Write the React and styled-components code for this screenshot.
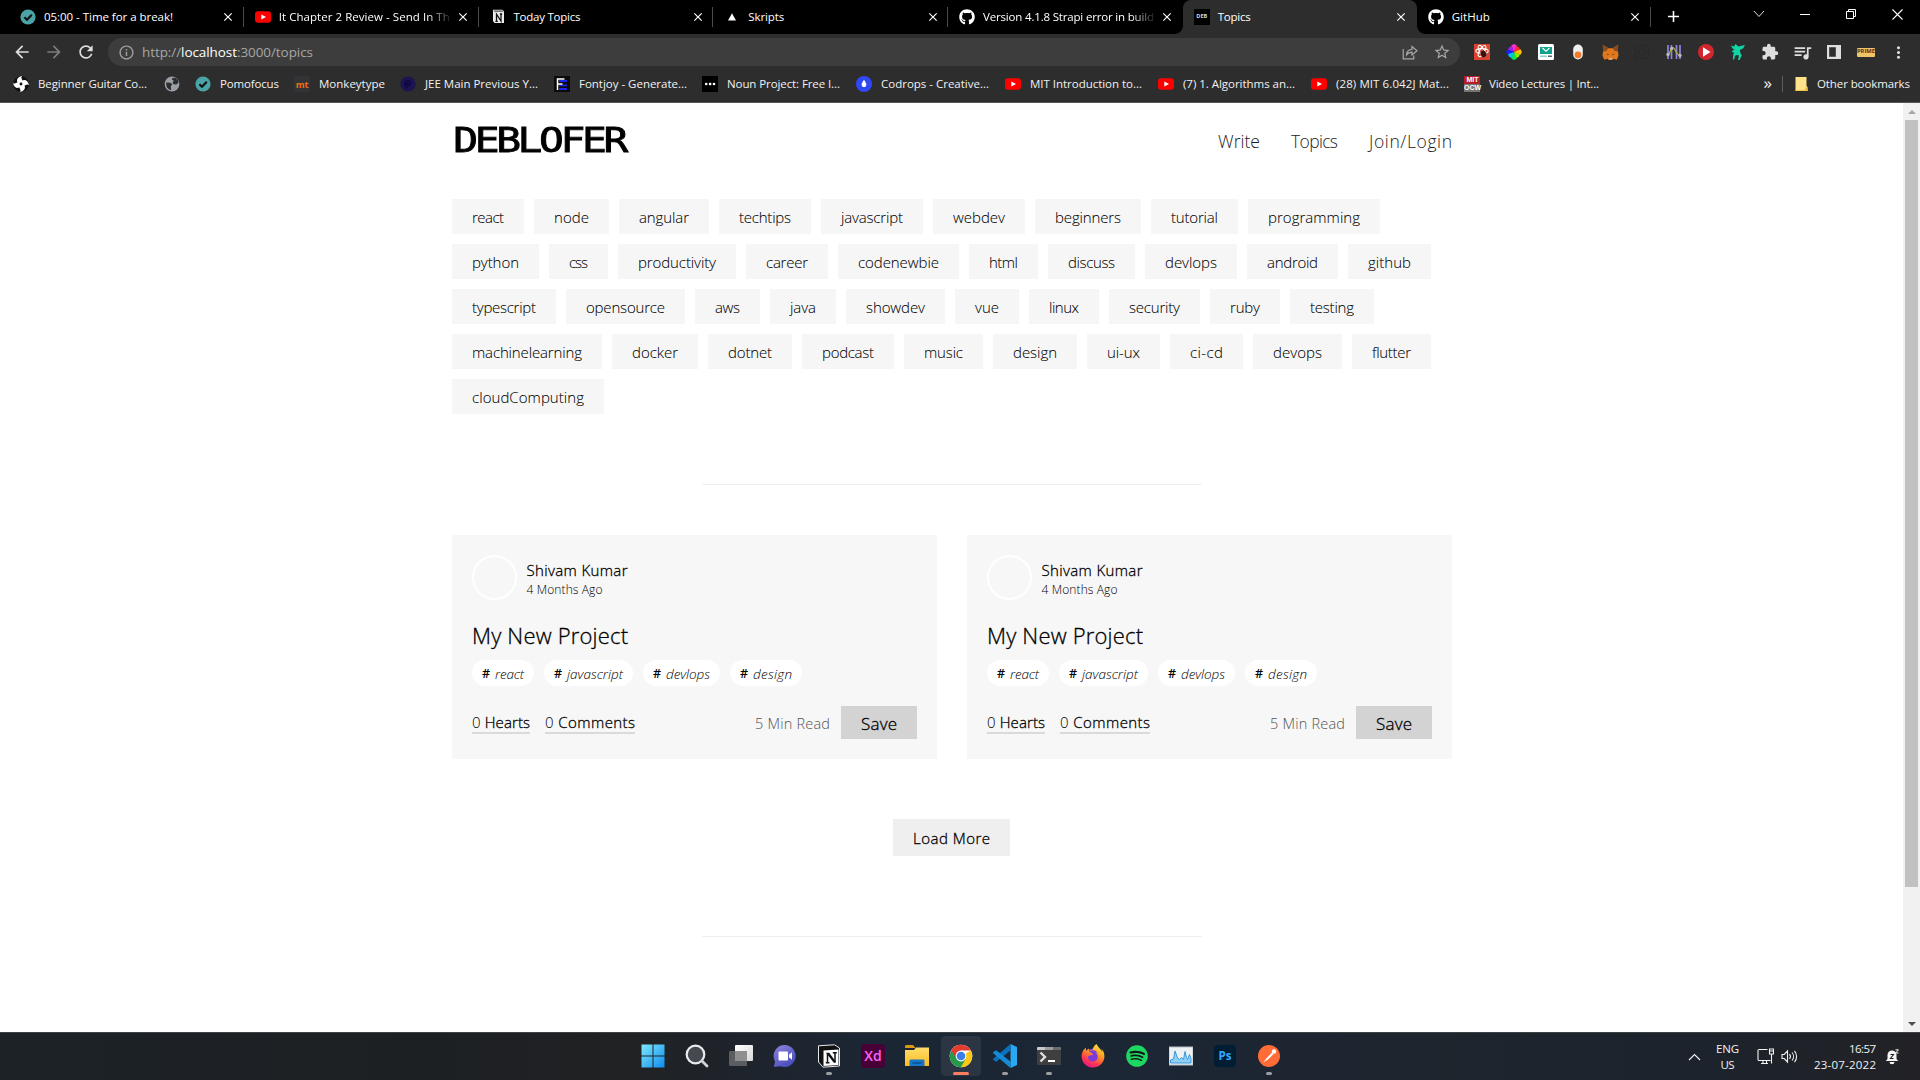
import React, { useLayoutEffect, useRef, useState } from "react";
import styled, { createGlobalStyle, css } from "styled-components";
import {
  MdArrowBack, MdArrowForward, MdRefresh, MdStarBorder, MdExtension, MdQueueMusic,
  MdMoreVert, MdInfoOutline, MdClose, MdAdd,
} from "react-icons/md";
import { FaGithub, FaFirefoxBrowser, FaSpotify } from "react-icons/fa";

const Global = createGlobalStyle`
  * { box-sizing: border-box; }
  body { margin: 0; overflow: hidden; background: #fff; font-family: "Open Sans", "Noto Sans", sans-serif; }
  svg { display: block; flex: none; }
`;

/* A weight between light and regular. */
const semilight = css`
  font-weight: 300;
  -webkit-text-stroke: 0.3px currentColor;
`;

/* Text that is tracked in or out so that it fills a given measure. */
const FitBox = styled.span`
  display: inline-block;
  flex: none;
  white-space: pre;
`;

function Fit({ w, children }) {
  const ref = useRef(null);
  const [spacing, setSpacing] = useState(0);
  useLayoutEffect(() => {
    const el = ref.current;
    const range = document.createRange();
    range.selectNodeContents(el);
    const scale = el.getBoundingClientRect().width / w;
    const natural = range.getBoundingClientRect().width / scale;
    setSpacing((w - natural) / Math.max(1, el.textContent.length - 1));
  }, [w]);
  return (
    <FitBox ref={ref} style={{ width: w, letterSpacing: `${spacing}px` }}>
      {children}
    </FitBox>
  );
}

/* ---------- window ---------- */

const Screen = styled.div`
  width: 1920px;
  height: 1080px;
  display: flex;
  flex-direction: column;
  overflow: hidden;
`;

const TabStrip = styled.div`
  height: 34px;
  flex: none;
  display: flex;
  background: #000;
  padding-left: 9px;
`;

const TabItem = styled.div`
  position: relative;
  flex: none;
  width: ${(p) => p.$w}px;
  height: 34px;
  display: flex;
  align-items: center;
  padding: 0 8.5px 0 11px;
  color: #fff;
  border-radius: 8px 8px 0 0;
  background: ${(p) => (p.$active ? "#2d2d2d" : "transparent")};
  ${(p) =>
    p.$active
      ? css`
          &::before, &::after {
            content: "";
            position: absolute;
            bottom: 0;
            width: 8px;
            height: 8px;
          }
          &::before { left: -8px; background: radial-gradient(circle at 0 0, #000 7.5px, #2d2d2d 8px); }
          &::after { right: -8px; background: radial-gradient(circle at 100% 0, #000 7.5px, #2d2d2d 8px); }
        `
      : ""}
`;

const TabTitle = styled.div`
  flex: 1;
  margin-left: 8px;
  font-size: 11.5px;
  line-height: 18px;
  white-space: nowrap;
  ${(p) => p.$fade && "mask-image: linear-gradient(to right, #000 calc(100% - 26px), transparent 100%);"}
`;

const TabClose = styled(MdClose)`
  width: 14px;
  height: 14px;
  margin-left: 3px;
  color: #fff;
  stroke: #fff;
`;

const TabRule = styled.div`
  width: 1px;
  height: 20px;
  margin: 7px 0 0 -1px;
  background: ${(p) => (p.$hidden ? "transparent" : "#4c4c4c")};
  flex: none;
  z-index: 1;
`;

const NewTab = styled(MdAdd)`
  width: 19px;
  height: 19px;
  margin: 7px 0 0 13px;
  color: #fff;
`;

const WindowControls = styled.div`
  margin-left: auto;
  display: flex;
  height: 28px;
`;

const WindowButton = styled.div`
  width: 46px;
  height: 28px;
  display: flex;
  align-items: center;
  justify-content: center;
`;

const Toolbar = styled.div`
  height: 36px;
  flex: none;
  display: flex;
  align-items: center;
  background: #2d2d2d;
  padding-left: 6px;
`;

const ToolCell = styled.div`
  width: 32px;
  height: 28px;
  flex: none;
  display: flex;
  align-items: center;
  justify-content: center;
  color: ${(p) => p.$color || "#dedede"};
`;

const Omnibox = styled.div`
  width: 1352px;
  height: 28px;
  margin: 0 6px;
  flex: none;
  display: flex;
  align-items: center;
  padding: 0 2px;
  border-radius: 14px;
  background: #3d3d3d;
`;

const Url = styled.div`
  flex: 1;
  font-size: 13.5px;
  line-height: 20px;
  color: #a6a6a6;
  b { font-weight: 400; color: #fff; }
`;

const BookmarkBar = styled.div`
  height: 33px;
  flex: none;
  display: flex;
  align-items: center;
  background: #2d2d2d;
  border-bottom: 1px solid #565656;
  padding: 0 10px 4px 13px;
  color: #f1f1f1;
  font-size: 11.5px;
  line-height: 18px;
`;

const Bookmark = styled.div`
  display: flex;
  align-items: center;
  gap: 9px;
  flex: none;
  margin-right: ${(p) => p.$after ?? 16}px;
`;

const BarRule = styled.div`
  width: 1px;
  height: 16px;
  margin: 0 12px 0 9px;
  background: #5c5c5c;
`;

const Overflow = styled.div`
  margin-left: auto;
  font-size: 17px;
  line-height: 14px;
  padding: 0 1px 3px 0;
`;

/* ---------- small icon tiles ---------- */

const MitTile = styled.div`
  width: 16px;
  height: 16px;
  flex: none;
  display: grid;
  grid-template-rows: 8px 8px;
  background: linear-gradient(#b31f27 50%, #77746f 50%);
  color: #fff;
  font: 700 7px/8px "Liberation Sans", sans-serif;
  text-align: center;
`;

const LetterTile = styled.div`
  width: ${(p) => p.$w || 16}px;
  height: ${(p) => p.$h || 16}px;
  flex: none;
  display: flex;
  align-items: center;
  justify-content: center;
  background: ${(p) => p.$bg};
  color: ${(p) => p.$color};
  border-radius: ${(p) => p.$r || 0}px;
  font: ${(p) => p.$weight || 700} ${(p) => p.$size}px/1 "Open Sans", sans-serif;
`;

const Check = () => (
  <svg width="16" height="16" viewBox="0 0 16 16">
    <circle cx="8" cy="8" r="7.6" fill="#4ba3a8" />
    <path d="M4.4 8.2l2.6 2.6 4.8-5" fill="none" stroke="#111" strokeWidth="2.2" />
  </svg>
);
const YouTube = () => (
  <svg width="16" height="16" viewBox="0 0 16 16">
    <rect x="0" y="2.2" width="16" height="11.6" rx="3" fill="#f00" />
    <path d="M6.3 5.4v5.2L11 8z" fill="#fff" />
  </svg>
);
const Triangle = () => (
  <svg width="16" height="16" viewBox="0 0 16 16"><path d="M8 4.2l4 7.4H4z" fill="#fff" /></svg>
);
const NotionTab = () => (
  <svg width="16" height="16" viewBox="0 0 16 16">
    <path d="M3 1.2h9.5l1.5 2V14H4.5L3 12z" fill="#ededed" />
    <path d="M3 1.2h9.5l1.3 1.7H4.5z" fill="#111" stroke="#ededed" strokeWidth=".8" />
    <path d="M6.5 12.2V5.2l4.5 6.8V5M5.4 12.3h2.4M9.8 5h2.4" fill="none" stroke="#111" strokeWidth="1.3" />
  </svg>
);
const Pinwheel = () => (
  <svg width="16" height="16" viewBox="0 0 16 16">
    <circle cx="8" cy="8" r="7.8" fill="#111" />
    <g fill="#fff">
      {[0, 90, 180, 270].map((a) => (
        <path key={a} transform={`rotate(${a} 8 8)`} d="M5.4 7.6C2.8 5 3.8 1.2 9 0 7.2 2.6 10.4 3.6 9.8 6.6z" />
      ))}
    </g>
    <circle cx="8" cy="8" r="1.4" fill="#111" />
  </svg>
);
const Swirl = () => (
  <svg width="16" height="16" viewBox="0 0 16 16">
    <circle cx="8" cy="8" r="7.6" fill="#1c1450" />
    <path d="M8.3 8a1 1 0 1 0-1 1.2c2 .6 3.5-1 3.2-2.6C10 4.3 6.5 4 5.2 6.2 4 8.6 5.2 11.6 8.2 11.8" fill="none" stroke="#0c0540" strokeWidth="1.3" />
  </svg>
);
const FTile = () => (
  <svg width="16" height="16" viewBox="0 0 16 16">
    <rect width="16" height="16" fill="#0b0b0f" />
    <path d="M5 5h8M5 9.3h8M5 13h8" stroke="#1a26e8" strokeWidth="1.8" />
    <path d="M3.5 14V3h7M3.5 8h5" fill="none" stroke="#fff" strokeWidth="1.5" />
  </svg>
);
const Dots = () => (
  <svg width="16" height="16" viewBox="0 0 16 16">
    <rect width="16" height="16" fill="#000" />
    <circle cx="4.2" cy="8" r="1.3" fill="#fff" /><rect x="6.9" y="6.8" width="2.4" height="2.4" fill="#fff" /><circle cx="12" cy="8" r="1.3" fill="#fff" />
  </svg>
);
const Drop = () => (
  <svg width="16" height="16" viewBox="0 0 16 16">
    <circle cx="8" cy="8" r="8" fill="#2f48f5" />
    <path d="M8 3.8c1.5 2.4 2.4 3.6 2.4 5a2.4 2.4 0 0 1-4.8 0c0-1.4.9-2.6 2.4-5z" fill="#fff" />
  </svg>
);
const Globe = () => (
  <svg width="16" height="16" viewBox="0 0 16 16">
    <circle cx="8" cy="8" r="7.4" fill="#9aa0a6" />
    <path d="M2.3 6.5l4 .3 2 1.5-1.5 2 .4 3.6C4 13.5 1.8 11 2.3 6.5zM8.5 2l2.5-.3c2 .9 3.3 2.5 3.6 4.8l-2.1 2-3-.3-1-2 1.5-1.4-2-1z" fill="#2d2d2d" />
  </svg>
);
const Folder = () => (
  <svg width="13" height="16" viewBox="0 0 13 16">
    <path d="M.5 1h11v9l1 1v4H.5z" fill="#ffe28a" /><path d="M10 15v-3.6h2.4V15z" fill="#f3c43c" />
    <path d="M.5 14.5h12" stroke="#f3c43c" />
  </svg>
);

const TABS = [
  { title: "05:00 - Time for a break!", w: 129, icon: <Check /> },
  { title: "It Chapter 2 Review - Send In Th", w: 171, icon: <YouTube />, fade: true },
  { title: "Today Topics", w: 67, icon: <NotionTab /> },
  { title: "Skripts", w: 36, icon: <Triangle /> },
  { title: "Version 4.1.8 Strapi error in build", w: 171, icon: <FaGithub size={16} color="#fff" />, fade: true },
  { title: "Topics", w: 33, icon: <LetterTile $bg="#000" $color="#d8d8d8" $size={5.5}>DEB</LetterTile>, active: true },
  { title: "GitHub", w: 38, icon: <FaGithub size={16} color="#fff" /> },
];

const BOOKMARKS = [
  { title: "Beginner Guitar Co...", w: 109, icon: <Pinwheel />, after: 17 },
  { icon: <Globe />, after: 15 },
  { title: "Pomofocus", w: 59, icon: <Check />, after: 15 },
  { title: "Monkeytype", w: 66, icon: <LetterTile $bg="#323437" $color="#f66e0d" $size={9} $r={3}>mt</LetterTile>, after: 15 },
  { title: "JEE Main Previous Y...", w: 113, icon: <Swirl /> },
  { title: "Fontjoy - Generate...", w: 108, icon: <FTile />, after: 15 },
  { title: "Noun Project: Free I...", w: 113, icon: <Dots /> },
  { title: "Codrops - Creative...", w: 108, icon: <Drop /> },
  { title: "MIT Introduction to...", w: 112, icon: <YouTube /> },
  { title: "(7) 1. Algorithms an...", w: 112, icon: <YouTube /> },
  { title: "(28) MIT 6.042J Mat...", w: 113, icon: <YouTube />, after: 15 },
  { title: "Video Lectures | Int...", w: 110, icon: <MitTile><span>MIT</span><span>OCW</span></MitTile> },
];

const EXTENSIONS = [
  <svg width="16" height="16" viewBox="0 0 16 16">
    <rect width="16" height="16" fill="#d9432f" />
    <g fill="none" stroke="#fff" strokeWidth="1.1"><ellipse cx="8" cy="7" rx="6.2" ry="2.4" /><ellipse cx="8" cy="7" rx="6.2" ry="2.4" transform="rotate(60 8 7)" /><ellipse cx="8" cy="7" rx="6.2" ry="2.4" transform="rotate(120 8 7)" /></g>
    <ellipse cx="9.5" cy="10" rx="2.8" ry="3.4" fill="#35120e" transform="rotate(-30 9.5 10)" />
  </svg>,
  <svg width="16" height="16" viewBox="-8 -8 16 16">
    {["#ff2a2a", "#ff2ad0", "#a020f0", "#2020ff", "#00c8ff", "#00e860", "#8cf000", "#ffc000"].map((c, i) => (
      <path key={c} d="M0 0L-2.7 -6.4L0 -7.6L2.7 -6.4z" fill={c} transform={`rotate(${i * -45 + 45}) scale(1 ${i % 2 ? 1.04 : 0.9})`} />
    ))}
  </svg>,
  <svg width="16" height="16" viewBox="0 0 16 16">
    <rect width="16" height="16" rx="1.5" fill="#fff" /><rect x="2" y="3" width="12" height="7" fill="#12a18c" />
    <path d="M4.5 4l3.5 3.2L11.5 4" fill="none" stroke="#fff" strokeWidth="1.2" /><path d="M2 11.5h7v1.5H2z" fill="#8fd3c8" /><path d="M10 11.5h4v1.5h-4z" fill="#5a6670" />
  </svg>,
  <svg width="16" height="16" viewBox="0 0 16 16">
    <rect x="3.2" y=".5" width="9.6" height="15" rx="4.8" fill="#eee" /><circle cx="8" cy="10.8" r="3.4" fill="#f47b25" />
  </svg>,
  <svg width="17" height="17" viewBox="0 0 16 16">
    <path d="M.8.8L6 4h4L15.2.8 15 7l.6 3.5-1.6 4.3-3-1L9.5 15h-3L5 13.8l-3 1L.4 10.5 1 7z" fill="#e2761b" />
    <path d="M.8.8L6 4 4 6.5 1 7zM15.2.8L10 4l2 2.5 3 .5z" fill="#8a4a1c" />
    <path d="M4.5 9l2 1-1 .6zM11.5 9l-2 1 1 .6z" fill="#233447" /><path d="M6.3 13h3.4v1.5H6.3z" fill="#c0ad9e" />
  </svg>,
  <svg width="16" height="16" viewBox="0 0 16 16" fill="none" stroke="#292929" strokeWidth="1.2"><rect x="1.5" y="1.5" width="13" height="13" rx="2" /><circle cx="8" cy="8" r="3" /></svg>,
  <svg width="16" height="16" viewBox="0 0 16 16" fill="none">
    <path d="M2 1v14M5.5 1v14M10.5 1v14M14 1v14" stroke="#8e86e0" strokeWidth="1.7" />
    <path d="M1.5 11C4 11 4.5 3 7 3.5S10 11.5 14 11" stroke="#b6b62c" strokeWidth="1.2" />
    <circle cx="2" cy="10.5" r="1.7" fill="#b9b9b9" /><circle cx="5.7" cy="4.5" r="1.7" fill="#b9b9b9" /><circle cx="14" cy="11.5" r="1.7" fill="#b9b9b9" />
  </svg>,
  <svg width="16" height="16" viewBox="0 0 16 16"><circle cx="8" cy="8" r="8" fill="#d2262f" /><path d="M5 3.2v9.6L12.5 8z" fill="#fff" /></svg>,
  <svg width="16" height="16" viewBox="0 0 16 16" fill="#0fd6a4">
    <path d="M1 1.5l3 1L5.5 0l3 2.5 6.5-1.5-2 3.5L9.8 6l.8 3.5 1.2 1.8L9.6 16H8l1-4.5-2.5-.5L5 12l-.8 3.5H2.8l.5-4.5L4 8l-1.5.5L2 7l2.5-1.5L2.5 4.5z" />
  </svg>,
  <MdExtension size={18} />,
  <MdQueueMusic size={21} />,
  <svg width="14" height="14" viewBox="0 0 14 14"><path fillRule="evenodd" d="M0 0h14v14H0zM2.2 2.2v9.6h6.6V2.2z" fill="#dedede" /></svg>,
  <LetterTile $bg="#f0c568" $color="#5e2a1a" $size={5.8} $w={18} $h={9} $r={1}>PRIME</LetterTile>,
  <MdMoreVert size={19} />,
];

function Browser() {
  return (
    <>
      <TabStrip>
        {TABS.map((t, i) => (
          <React.Fragment key={t.title}>
            <TabItem $active={t.active} $w={i < 5 ? 234.75 : 234}>
              {t.icon}
              <TabTitle $fade={t.fade}><Fit w={t.w}>{t.title}</Fit></TabTitle>
              <TabClose />
            </TabItem>
            <TabRule $hidden={i === 4 || i === 5} />
          </React.Fragment>
        ))}
        <NewTab />
        <WindowControls>
          <WindowButton><svg width="12" height="8" viewBox="0 0 12 8" fill="none" stroke="#ddd"><path d="M1 1l5 5.5L11 1" /></svg></WindowButton>
          <WindowButton><svg width="10" height="10" viewBox="0 0 10 10"><path d="M0 5.5h10" stroke="#fff" /></svg></WindowButton>
          <WindowButton><svg width="10" height="10" viewBox="0 0 10 10" fill="none" stroke="#fff"><path d="M.5 2.5h7v7h-7zM2.5 2.5v-2h7v7h-2" /></svg></WindowButton>
          <WindowButton><svg width="11" height="11" viewBox="0 0 11 11" fill="none" stroke="#fff" strokeWidth="1.1"><path d="M.5.5l10 10M10.5.5l-10 10" /></svg></WindowButton>
        </WindowControls>
      </TabStrip>
      <Toolbar>
        <ToolCell><MdArrowBack size={20} /></ToolCell>
        <ToolCell $color="#7c7c7c"><MdArrowForward size={20} /></ToolCell>
        <ToolCell><MdRefresh size={20} /></ToolCell>
        <Omnibox>
          <ToolCell $color="#a0a0a0"><MdInfoOutline size={17} /></ToolCell>
          <Url><Fit w={171}>http://<b>localhost</b>:3000/topics</Fit></Url>
          <ToolCell $color="#a8a8a8">
            <svg width="16" height="16" viewBox="0 0 16 16" fill="none" stroke="#a8a8a8" strokeWidth="1.2">
              <path d="M1.2 5v9.8h10.6V11.5M4.5 11c.3-4 2.5-5.5 5.5-5.6V2.6L15 6.8 10 11V8.2C7.5 8.2 6 9 4.5 11z" />
            </svg>
          </ToolCell>
          <ToolCell $color="#a8a8a8"><MdStarBorder size={18} /></ToolCell>
        </Omnibox>
        {EXTENSIONS.map((e, i) => <ToolCell key={i}>{e}</ToolCell>)}
      </Toolbar>
      <BookmarkBar>
        {BOOKMARKS.map((b, i) => (
          <Bookmark key={i} $after={b.after}>
            {b.icon}
            {b.title && <Fit w={b.w}>{b.title}</Fit>}
          </Bookmark>
        ))}
        <Overflow>»</Overflow>
        <BarRule />
        <Bookmark $after={0}><Folder /><Fit w={93}>Other bookmarks</Fit></Bookmark>
      </BookmarkBar>
    </>
  );
}

/* ---------- page ---------- */

const Viewport = styled.div`
  flex: 1;
  min-height: 0;
  display: flex;
`;

const Page = styled.main`
  flex: 1;
  display: flex;
  flex-direction: column;
  align-items: center;
  padding-left: 1px;
  background: #fff;
  color: #000;
`;

const Header = styled.header`
  width: 1000px;
  height: 76px;
  flex: none;
  display: flex;
  align-items: center;
  justify-content: space-between;
`;

const Brand = styled.div`
  padding-left: 1px;
  font: 400 33px/40px "DejaVu Sans Mono", monospace;
  -webkit-text-stroke: 0.8px currentColor;
  transform: scaleX(1.25);
  transform-origin: left center;
`;

const Nav = styled.nav`
  display: flex;
  gap: 31px;
  font-size: 17.5px;
  font-weight: 300;
  line-height: 24px;
  color: #1c1c1c;
`;

const TagCloud = styled.div`
  width: 1000px;
  margin-top: 20px;
  display: flex;
  flex-wrap: wrap;
  gap: 10px;
`;

const Tag = styled.div`
  height: 35px;
  padding: 7px 20px 6px;
  background: #f6f6f6;
  font-size: 15px;
  font-weight: 300;
  -webkit-text-stroke: 0.06px currentColor;
  line-height: 22px;
`;

const Divider = styled.hr`
  width: 500px;
  height: 1px;
  flex: none;
  margin: ${(p) => p.$top}px 0 0;
  border: 0;
  background: #efefef;
`;

const Cards = styled.div`
  width: 1000px;
  margin-top: 50px;
  display: grid;
  grid-template-columns: 1fr 1fr;
  gap: 30px;
`;

const Card = styled.article`
  height: 224px;
  padding: 20px;
  background: #f7f7f7;
`;

const Author = styled.div`
  display: flex;
  align-items: center;
  gap: 9.5px;
  height: 45px;
`;

const Avatar = styled.div`
  width: 45px;
  height: 45px;
  border: 2px solid #fff;
  border-radius: 50%;
`;

const AuthorText = styled.div`
  display: flex;
  flex-direction: column;
  padding-top: 4px;
`;

const Name = styled.div`
  ${semilight}
  font-size: 15px;
  line-height: 18px;
  height: 21px;
`;

const When = styled.div`
  font-size: 12px;
  font-weight: 300;
  line-height: 16px;
`;

const Title = styled.h2`
  ${semilight}
  margin: 20px 0 10px;
  font-size: 22px;
  line-height: 30px;
`;

const Pills = styled.div`
  display: flex;
  gap: 10px;
`;

const Pill = styled.div`
  height: 26px;
  padding: 2px 10px 0;
  display: flex;
  align-items: center;
  gap: 4px;
  border-radius: 13px;
  background: #fff;
  font-size: 13.5px;
  line-height: 22px;
  i { font-weight: 300; }
  b { font-weight: 600; width: 9px; font-size: 12.5px; }
`;

const Actions = styled.div`
  margin-top: 20px;
  height: 33px;
  display: flex;
  align-items: center;
`;

const Stat = styled.div`
  ${semilight}
  margin-right: 15px;
  padding-top: 1px;
  font-size: 15px;
  line-height: 20px;
  height: 23px;
  border-bottom: 2px solid #dadada;
  span span { -webkit-text-stroke: 0; }
`;

const ReadTime = styled.div`
  margin: 2px 11px 0 auto;
  font-size: 14.5px;
  font-weight: 300;
  line-height: 20px;
  color: #555;
`;

const SaveButton = styled.button`
  width: 76px;
  height: 33px;
  padding: 2px 0 0;
  border: 0;
  background: #d3d3d3;
  color: #000;
  font: 300 17px/22px "Open Sans", sans-serif;
  ${semilight}
`;

const LoadMore = styled.button`
  width: 117px;
  height: 37px;
  flex: none;
  margin: 60px 2px 0 0;
  padding: 0 0 0 1px;
  border: 0;
  background: #efefef;
  color: #000;
  font: 300 15px/20px "Open Sans", sans-serif;
  ${semilight}
`;

const Scrollbar = styled.div`
  width: 17px;
  display: flex;
  flex-direction: column;
  align-items: center;
  background: #f1f1f1;
`;

const ScrollArrow = styled.div`
  height: 17px;
  display: flex;
  align-items: center;
  margin-top: ${(p) => (p.$end ? "auto" : "0")};
`;

const Thumb = styled.div`
  width: 13px;
  height: 767px;
  background: #c1c1c1;
`;

/* label and the width of its text */
const TAGS = [
  ["react", 32], ["node", 35], ["angular", 50], ["techtips", 52], ["javascript", 62], ["webdev", 52], ["beginners", 66], ["tutorial", 47], ["programming", 92],
  ["python", 47], ["css", 19], ["productivity", 78], ["career", 42], ["codenewbie", 81], ["html", 29], ["discuss", 47], ["devlops", 52], ["android", 51], ["github", 43],
  ["typescript", 64], ["opensource", 79], ["aws", 25], ["java", 26], ["showdev", 59], ["vue", 24], ["linux", 30], ["security", 51], ["ruby", 30], ["testing", 44],
  ["machinelearning", 110], ["docker", 46], ["dotnet", 44], ["podcast", 52], ["music", 39], ["design", 44], ["ui-ux", 33], ["ci-cd", 33], ["devops", 49], ["flutter", 39],
  ["cloudComputing", 112],
];

const POST_TAGS = [["react", 29], ["javascript", 56], ["devlops", 44], ["design", 39]];

function Post() {
  return (
    <Card>
      <Author>
        <Avatar />
        <AuthorText>
          <Name><Fit w={101}>Shivam Kumar</Fit></Name>
          <When><Fit w={76}>4 Months Ago</Fit></When>
        </AuthorText>
      </Author>
      <Title><Fit w={156}>My New Project</Fit></Title>
      <Pills>
        {POST_TAGS.map(([t, w]) => (
          <Pill key={t}><b>#</b><i><Fit w={w}>{t}</Fit></i></Pill>
        ))}
      </Pills>
      <Actions>
        <Stat><Fit w={58}><span>0</span> Hearts</Fit></Stat>
        <Stat><Fit w={90}><span>0</span> Comments</Fit></Stat>
        <ReadTime><Fit w={75}>5 Min Read</Fit></ReadTime>
        <SaveButton><Fit w={36}>Save</Fit></SaveButton>
      </Actions>
    </Card>
  );
}

function BlogPage() {
  return (
    <Viewport>
      <Page>
        <Header>
          <Brand><Fit w={140}>DEBLOFER</Fit></Brand>
          <Nav>
            <Fit w={42}>Write</Fit>
            <Fit w={47}>Topics</Fit>
            <Fit w={83}>Join/Login</Fit>
          </Nav>
        </Header>
        <TagCloud>
          {TAGS.map(([t, w]) => <Tag key={t}><Fit w={w}>{t}</Fit></Tag>)}
        </TagCloud>
        <Divider $top={70} />
        <Cards><Post /><Post /></Cards>
        <LoadMore><Fit w={77}>Load More</Fit></LoadMore>
        <Divider $top={80} />
      </Page>
      <Scrollbar>
        <ScrollArrow><svg width="8" height="4" viewBox="0 0 8 4"><path d="M0 4l4-4 4 4z" fill="#a3a3a3" /></svg></ScrollArrow>
        <Thumb />
        <ScrollArrow $end><svg width="8" height="4" viewBox="0 0 8 4"><path d="M0 0l4 4 4-4z" fill="#505050" /></svg></ScrollArrow>
      </Scrollbar>
    </Viewport>
  );
}

/* ---------- taskbar ---------- */

const Taskbar = styled.footer`
  height: 48px;
  flex: none;
  display: flex;
  align-items: flex-start;
  padding: 3px 21px 0 631px;
  border-top: 1px solid #3f4245;
  background: linear-gradient(90deg, #1c2227 0%, #1d2023 22%, #202224 33%, #1b2635 46%, #1c2634 60%, #1d252d 75%, #1c232c 88%, #222226 100%);
  color: #f2f2f2;
`;

const Dock = styled.div`
  display: flex;
  gap: 4px;
  padding-left: 2px;
`;

const DockItem = styled.div`
  width: 40px;
  height: 40px;
  display: flex;
  flex-direction: column;
  align-items: center;
  padding-top: 8px;
  border-radius: 4px;
  background: ${(p) => (p.$state === "active" ? "rgba(255,255,255,0.07)" : "transparent")};
  &::after {
    content: "";
    margin-top: 4px;
    height: 3px;
    width: ${(p) => (p.$state === "active" ? 16 : p.$state === "open" ? 6 : 0)}px;
    border-radius: 2px;
    background: ${(p) => (p.$state === "active" ? "#fb7d62" : "#9b9fa4")};
  }
`;

const IconFrame = styled.div`
  width: 24px;
  height: 24px;
  flex: none;
  display: flex;
  align-items: center;
  justify-content: center;
`;

const Tray = styled.div`
  margin-left: auto;
  height: 41px;
  display: flex;
  align-items: center;
  font-size: 11.5px;
  line-height: 16px;
`;

const TrayLines = styled.div`
  display: flex;
  flex-direction: column;
  align-items: ${(p) => p.$align};
  margin: 0 ${(p) => p.$right}px 0 ${(p) => p.$left}px;
`;

const Speaker = styled.svg`
  margin-left: 7px;
`;

const DOCK = [
  { icon: (
    <svg width="24" height="24" viewBox="0 0 24 24">
      <defs><linearGradient id="win" x1="0" y1="0" x2="1" y2="1"><stop offset="0" stopColor="#7fe9fb" /><stop offset="1" stopColor="#0d8bf0" /></linearGradient></defs>
      <path d="M.5.5h11v11H.5zM12.5.5h11v11h-11zM.5 12.5h11v11H.5zM12.5 12.5h11v11h-11z" fill="url(#win)" />
    </svg>) },
  { icon: (
    <svg width="24" height="24" viewBox="0 0 24 24">
      <circle cx="10.5" cy="10.5" r="8.8" fill="#464a50" stroke="#e9ebed" strokeWidth="2.2" /><path d="M17 17l5 5" stroke="#d2d5d8" strokeWidth="2.8" strokeLinecap="round" />
    </svg>) },
  { icon: (
    <svg width="24" height="24" viewBox="0 0 24 24">
      <defs><linearGradient id="tv" x1="0" y1="0" x2="1" y2="1"><stop offset="0" stopColor="#fff" /><stop offset="1" stopColor="#d8d8d8" /></linearGradient></defs>
      <rect x="6" y="1" width="18" height="16" rx="1" fill="url(#tv)" /><rect x="0" y="7" width="18" height="15" rx="1" fill="#5c5d5f" /><rect x="6" y="7" width="12" height="10" fill="#8f8f8f" />
    </svg>) },
  { icon: (
    <svg width="24" height="24" viewBox="0 0 24 24">
      <defs><linearGradient id="chat" x1="0" y1="0" x2=".6" y2="1"><stop offset="0" stopColor="#8f86dd" /><stop offset="1" stopColor="#4a4dbd" /></linearGradient></defs>
      <path d="M12 1a11 11 0 1 1-4.5 21.2L.8 23l1.3-5.6A11 11 0 0 1 12 1z" fill="url(#chat)" /><rect x="5.5" y="7.5" width="9.5" height="9" rx="1" fill="#fff" /><path d="M16 10.8l3-2.5v7.4l-3-2.5z" fill="#fff" />
    </svg>) },
  { state: "open", icon: (
    <svg width="24" height="24" viewBox="0 0 24 24">
      <path d="M1.5 1.8L17.5.8 22.5 4v18L6 23.2 1.5 18z" fill="#111" stroke="#e8e8e8" strokeWidth="1" />
      <path d="M2.8 3l14-.9 3.6 2.2L6 5.2z" fill="#111" /><path d="M6.5 6.5l15-.9v15.4L6.5 22z" fill="#fff" />
      <path d="M10.5 9.5V18.6M8.8 18.8h3.6M15.8 8.7h4M18 9v9" fill="none" stroke="#111" strokeWidth="1.5" /><path d="M8.8 8.8h3.4l6.5 8.7v1.3h-1.9L10 10z" fill="#111" />
    </svg>) },
  { icon: <LetterTile $bg="#470137" $color="#ff61f6" $weight={600} $size={14} $w={24} $h={24} $r={4}>Xd</LetterTile> },
  { icon: (
    <svg width="24" height="24" viewBox="0 0 24 24">
      <defs><linearGradient id="fold" x1="0" y1="0" x2="0" y2="1"><stop offset="0" stopColor="#ffdd6b" /><stop offset="1" stopColor="#fbbc22" /></linearGradient></defs>
      <path d="M0 2.5C0 1.6.6 1 1.5 1H8l2.5 3H0z" fill="#d99b12" /><path d="M0 6h9l2-2.5h13V22H0z" fill="url(#fold)" /><path d="M4.5 22v-5c0-1 .5-1.5 1.5-1.5h12c1 0 1.5.5 1.5 1.5v5z" fill="#1677c8" /><path d="M7.5 19h9" stroke="#0b4f8c" strokeWidth="1.5" />
    </svg>) },
  { state: "active", icon: (
    <svg width="24" height="24" viewBox="0 0 24 24">
      <circle cx="12" cy="12" r="11.3" fill="#fff" />
      <path d="M12 12L21.8 6.4A11.3 11.3 0 0 1 12 23.3z" fill="#fbc916" />
      <path d="M12 12L16.6 14.8 12 23.3A11.3 11.3 0 0 1 2.2 6.4z" fill="#259b4a" />
      <path d="M12 6.6h9.9A11.3 11.3 0 0 0 2.2 6.3L7.3 14.5z" fill="#e33b2e" />
      <circle cx="12" cy="12" r="5.4" fill="#fff" /><circle cx="12" cy="12" r="4.3" fill="#3b7de9" />
    </svg>) },
  { state: "open", icon: (
    <svg width="24" height="24" viewBox="0 0 24 24">
      <path d="M17.5 0L24 3v18l-6.5 3z" fill="#2aa8f2" /><path d="M17.5 0v6.5L3.2 17.8 0 15.8V15z" fill="#0a72bd" /><path d="M17.5 24v-6.5L3.2 6.2 0 8.2V9z" fill="#158bd8" />
    </svg>) },
  { state: "open", icon: (
    <svg width="24" height="24" viewBox="0 0 24 24">
      <rect x="0" y="3" width="24" height="18" rx="1" fill="#3f3f3f" /><path d="M0 6V4a1 1 0 0 1 1-1h15v3z" fill="#c9c9c9" /><path d="M8 3h8v3H8z" fill="#9d9d9d" /><path d="M16 3h7a1 1 0 0 1 1 1v2h-8z" fill="#6d6d6d" />
      <path d="M3.5 8.5L8 13l-4.5 4.5" fill="none" stroke="#dedede" strokeWidth="2.4" /><path d="M11 17h7" stroke="#fff" strokeWidth="2" />
    </svg>) },
  { icon: (
    <svg width="24" height="24" viewBox="0 0 24 24">
      <defs>
        <linearGradient id="fox" x1=".8" y1="0" x2=".3" y2="1"><stop offset="0" stopColor="#fff04a" /><stop offset=".4" stopColor="#ff9a1f" /><stop offset=".75" stopColor="#ff3750" /><stop offset="1" stopColor="#e3158a" /></linearGradient>
      </defs>
      <circle cx="12" cy="13" r="8.5" fill="#7a3bd6" />
      <FaFirefoxBrowser size={24} fill="url(#fox)" />
    </svg>) },
  { icon: (
    <svg width="24" height="24" viewBox="0 0 24 24">
      <circle cx="12" cy="12" r="10" fill="#10161a" />
      <g transform="translate(.8 .8)"><FaSpotify size={22.4} color="#1ed760" /></g>
    </svg>) },
  { icon: (
    <svg width="24" height="24" viewBox="0 0 24 24">
      <rect x="0" y="3" width="24" height="18" fill="#eef1f4" stroke="#b9bec4" /><path d="M1.5 19v-3l3-1 1.5-8 2.5 7 2 1.5 2-2 2 2 1.5-8 1.5 6 1 2 2-5 1.5 4V19z" fill="#8fd0f7" stroke="#2d8fd6" strokeWidth=".9" />
    </svg>) },
  { icon: <IconFrame><LetterTile $bg="#001d34" $color="#31a8ff" $size={11.5} $w={22} $h={22} $r={4}>Ps</LetterTile></IconFrame> },
  { state: "open", icon: (
    <svg width="24" height="24" viewBox="0 0 24 24">
      <circle cx="12" cy="12" r="11" fill="#ff6c37" /><path d="M6 18.5l3.5-4.3 5.5-5.7 1.6 1.6-5.7 5.5z" fill="#fff" /><circle cx="17" cy="7.5" r="2.2" fill="#fff" />
    </svg>) },
];

function Dockbar() {
  return (
    <Taskbar>
      <Dock>
        {DOCK.map((d, i) => <DockItem key={i} $state={d.state}>{d.icon}</DockItem>)}
      </Dock>
      <Tray>
        <svg width="13" height="8" viewBox="0 0 13 8" fill="none" stroke="#eee" strokeWidth="1.2"><path d="M1 7l5.5-5.5L12 7" /></svg>
        <TrayLines $align="center" $left={15} $right={18}>
          <Fit w={23}>ENG</Fit>
          <Fit w={14}>US</Fit>
        </TrayLines>
        <svg width="17" height="17" viewBox="0 0 17 17" fill="none" stroke="#f2f2f2" strokeWidth="1.1">
          <path d="M10.5 1.5H2a1 1 0 0 0-1 1v9a1 1 0 0 0 1 1h11.5M4 15.5h7M6 12.5v3M9.5 12.5v3M12.5 1h4v5h-4zM12.5 3h4M14.5 6v9.5" />
        </svg>
        <Speaker width="17" height="15" viewBox="0 0 17 15" fill="none" stroke="#f2f2f2" strokeWidth="1.1">
          <path d="M1 5.5h2.2L6.5 2v11L3.2 9.5H1zM8.5 5.2a3.5 3.5 0 0 1 0 4.6M11 3.5a6 6 0 0 1 0 8M13.5 1.8a9 9 0 0 1 0 11.4" />
        </Speaker>
        <TrayLines $align="flex-end" $left={16} $right={9}>
          <Fit w={27}>16:57</Fit>
          <Fit w={62}>23-07-2022</Fit>
        </TrayLines>
        <svg width="14" height="16" viewBox="0 0 14 16">
          <path d="M7 1.5a4.5 4.5 0 0 0-4.5 4.5v4L.8 12h12.4l-1.7-2V6A4.5 4.5 0 0 0 7 1.5zM4.5 13a2.5 2.2 0 0 0 5 0z" fill="#f5f5f5" />
          <path d="M5.5 5.5h3l-3 4h3" fill="none" stroke="#222" strokeWidth="1.1" /><path d="M10.5.8h3l-3 3.2h3" fill="none" stroke="#f5f5f5" strokeWidth="1" />
        </svg>
      </Tray>
    </Taskbar>
  );
}

export default function App() {
  return (
    <Screen>
      <Global />
      <Browser />
      <BlogPage />
      <Dockbar />
    </Screen>
  );
}
